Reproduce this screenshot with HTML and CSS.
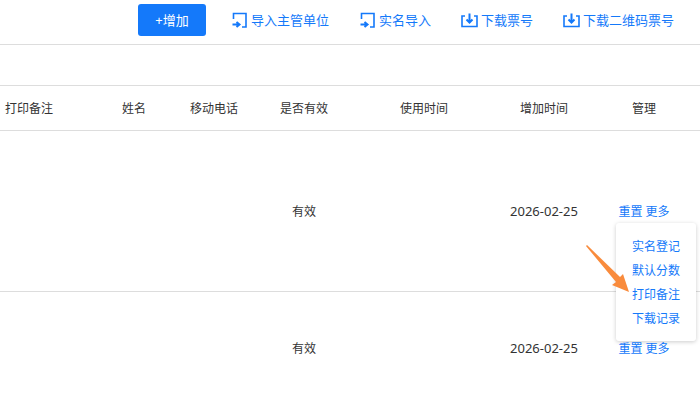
FILE: index.html
```html
<!DOCTYPE html>
<html lang="zh-CN">
<head>
<meta charset="utf-8">
<title>票号管理</title>
<link rel="stylesheet" href="styles.css">
</head>
<body>
<header class="toolbar">
  <button class="add" type="button">+增加</button>
  <nav class="actions">
    <a class="action" href="#"><svg class="icon" viewBox="0 0 18 18"><path d="M2.5 8V2.5H15V16H11"/><path class="bold" d="M1.5 13.5H8M5.5 11L8.5 13.5L5.5 16"/></svg>导入主管单位</a>
    <a class="action" href="#"><svg class="icon" viewBox="0 0 18 18"><path d="M2.5 8V2.5H15V16H11"/><path class="bold" d="M1.5 13.5H8M5.5 11L8.5 13.5L5.5 16"/></svg>实名导入</a>
    <a class="action" href="#"><svg class="icon" viewBox="0 0 18 18"><path d="M4 5H1V15.5H16V5H13"/><path class="bold" d="M8.5 2.5V11M5.5 8.5L8.5 11.5L11.5 8.5"/></svg>下载票号</a>
    <a class="action" href="#"><svg class="icon" viewBox="0 0 18 18"><path d="M4 5H1V15.5H16V5H13"/><path class="bold" d="M8.5 2.5V11M5.5 8.5L8.5 11.5L11.5 8.5"/></svg>下载二维码票号</a>
  </nav>
</header>
<main>
  <table class="tickets">
    <colgroup>
      <col>
      <col class="name">
      <col class="phone">
      <col class="wide">
      <col class="wide">
      <col class="wide">
      <col class="manage">
    </colgroup>
    <thead>
      <tr><th>打印备注</th><th>姓名</th><th>移动电话</th><th>是否有效</th><th>使用时间</th><th>增加时间</th><th>管理</th></tr>
    </thead>
    <tbody>
      <tr class="first">
        <td></td><td></td><td></td><td>有效</td><td></td><td class="date">2026-02-25</td>
        <td>
          <div class="ops">
            <a href="#">重置</a> <a href="#">更多</a>
            <div class="menu">
              <a href="#">实名登记</a>
              <a href="#">默认分数</a>
              <a href="#">打印备注</a>
              <a href="#">下载记录</a>
              <svg class="pointer" viewBox="0 0 44 48"><path d="M1 0L34 32L37 29L43 47L26 40L30 37L0 1Z"/></svg>
            </div>
          </div>
        </td>
      </tr>
      <tr class="second">
        <td></td><td></td><td></td><td>有效</td><td></td><td class="date">2026-02-25</td>
        <td><div class="ops"><a href="#">重置</a> <a href="#">更多</a></div></td>
      </tr>
    </tbody>
  </table>
</main>
</body>
</html>
```
FILE: styles.css
```css
* {
  box-sizing: border-box;
}

body {
  margin: 0;
  height: 100vh;
  overflow: hidden;
  background: #fff;
  color: #333;
  font: 12px/18px "Noto Sans", "Noto Sans CJK SC", sans-serif;
}

a {
  color: #1479fa;
  text-decoration: none;
}

.toolbar {
  display: flex;
  justify-content: flex-end;
  align-items: center;
  gap: 25px;
  padding: 4px 26px 8px 0;
  border-bottom: 1px solid #ddd;
  font-size: 13px;
}

.add {
  width: 68px;
  height: 32px;
  padding: 0;
  border: 0;
  border-radius: 3px;
  background: #1479fa;
  color: #fff;
  font: inherit;
}

.actions {
  display: flex;
  gap: 30px;
}

.action {
  display: flex;
  align-items: center;
  gap: 2px;
  white-space: nowrap;
}

.icon {
  width: 18px;
  height: 18px;
  fill: none;
  stroke: #1479fa;
  stroke-width: 1.6;
}

.icon .bold {
  stroke-width: 2;
}

.tickets {
  width: 100%;
  margin-top: 40px;
  border-top: 1px solid #ddd;
  border-spacing: 0;
  table-layout: fixed;
}

.name {
  width: 100px;
}

.phone {
  width: 60px;
}

.wide {
  width: 120px;
}

.manage {
  width: 96px;
}

th,
td {
  padding: 2px 0 0;
  text-align: center;
  font-weight: normal;
  white-space: nowrap;
}

th {
  height: 45px;
  border-bottom: 1px solid #ddd;
}

th:first-child {
  padding-left: 5px;
  text-align: left;
}

th:last-child,
td:last-child {
  padding-right: 16px;
}

.first td {
  height: 161px;
  border-bottom: 1px solid #ddd;
}

.second td {
  height: 112px;
}

.tickets .date {
  padding-top: 0;
  font-size: 13px;
}

.ops {
  position: relative;
}

.menu {
  position: absolute;
  top: 20px;
  left: 12px;
  display: flex;
  flex-direction: column;
  padding: 12px 16px 10px;
  border-radius: 3px;
  background: #fff;
  box-shadow: 0 1px 4px rgba(0, 0, 0, 0.2);
  line-height: 24px;
}

.pointer {
  position: absolute;
  top: 22px;
  left: -30px;
  width: 44px;
  height: 48px;
  fill: #f98b3c;
}
```
